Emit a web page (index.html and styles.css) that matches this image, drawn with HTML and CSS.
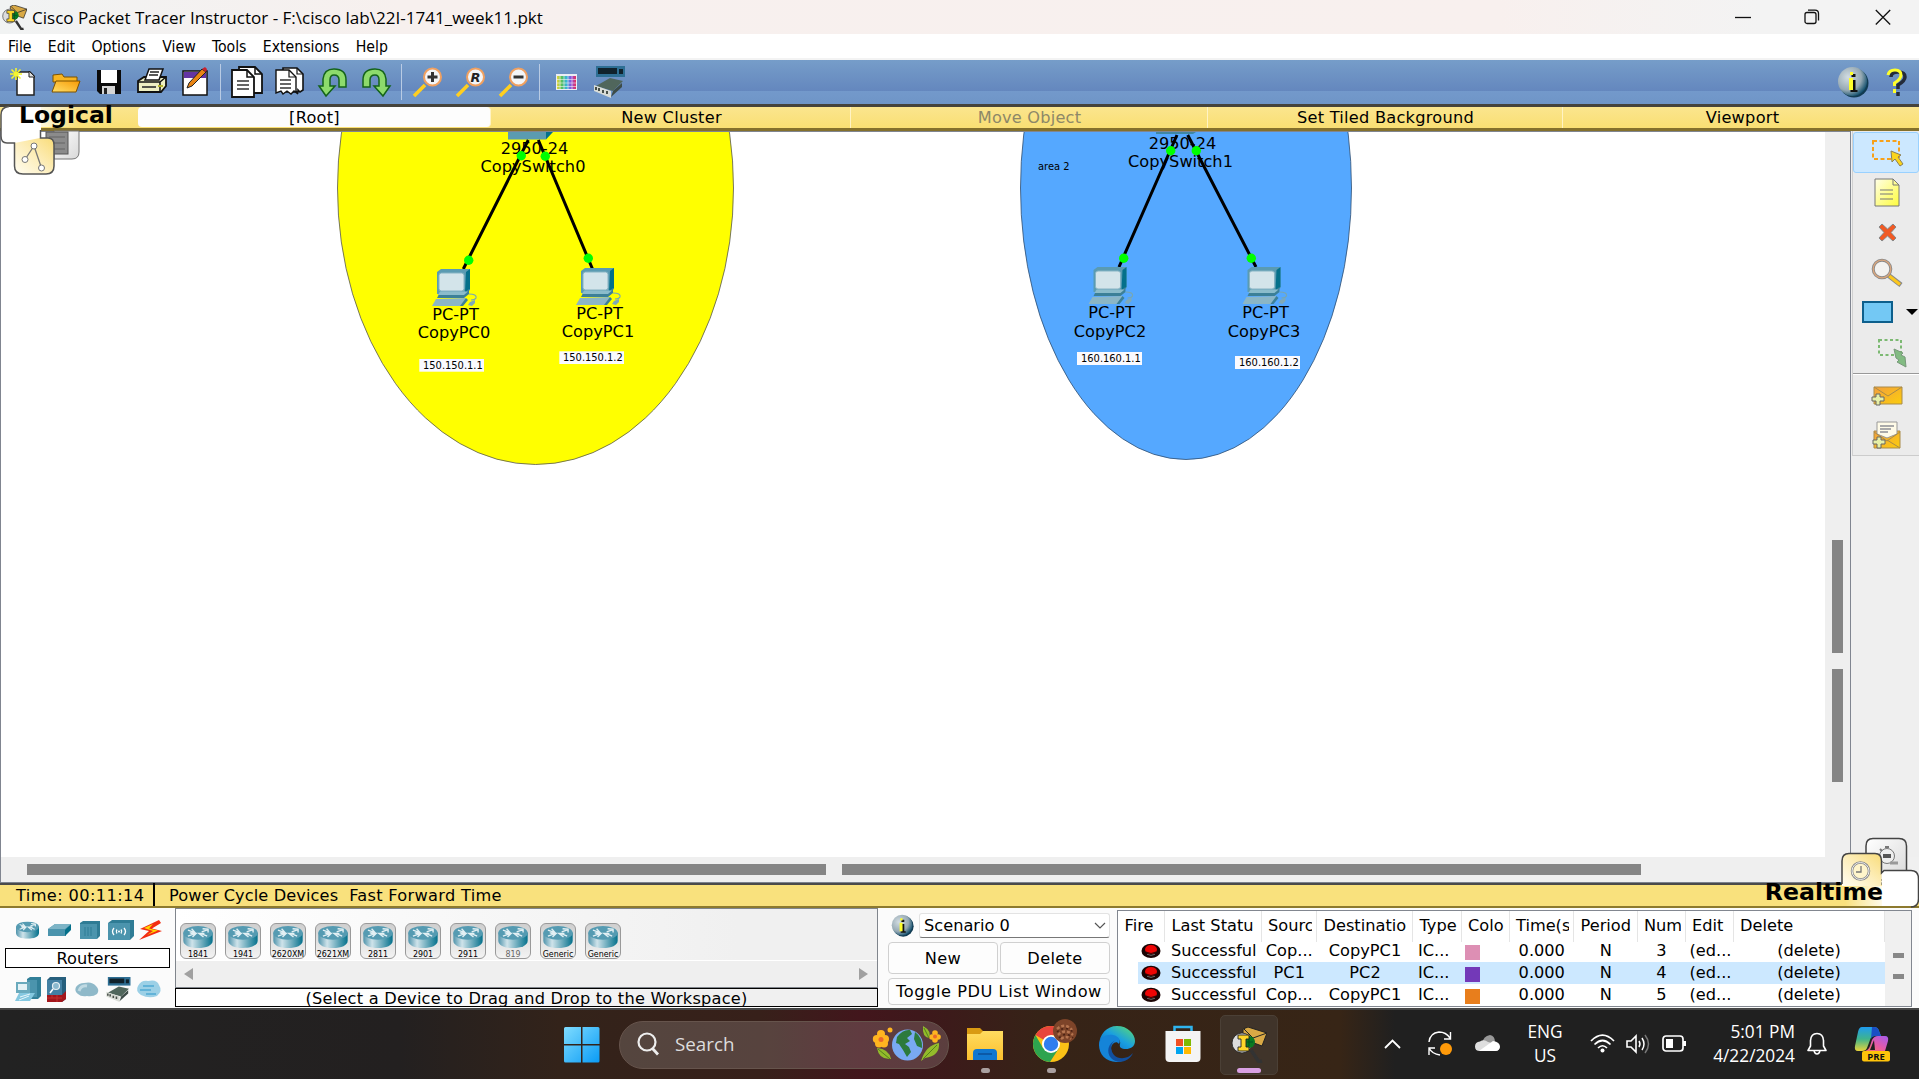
FILE: index.html
```
<!DOCTYPE html>
<html lang="en">
<head>
<meta charset="utf-8">
<title>Cisco Packet Tracer Instructor</title>
<link rel="stylesheet" href="styles.css">
</head>
<body>
<svg class="defs" width="0" height="0" aria-hidden="true">
  <defs>
    <linearGradient id="gTeal" x1="0" x2="1"><stop offset="0" stop-color="#4f93ab"/><stop offset=".3" stop-color="#cfe3ea"/><stop offset="1" stop-color="#04718c"/></linearGradient>
    <linearGradient id="gTab" x1="0" x2="1" y1="1" y2="0"><stop offset="0" stop-color="#fffdf2"/><stop offset=".5" stop-color="#fdeebb"/><stop offset="1" stop-color="#f9dc78"/></linearGradient>
    <linearGradient id="gWhiteTab" x1="0" x2="1"><stop offset=".35" stop-color="#fff"/><stop offset="1" stop-color="#fff" stop-opacity="0"/></linearGradient>
    <linearGradient id="gRealTab" x1="1" x2="0"><stop offset=".4" stop-color="#fff"/><stop offset="1" stop-color="#fff" stop-opacity="0"/></linearGradient>
    <linearGradient id="gGray" x1="0" x2="1" y1="0" y2="1"><stop offset="0" stop-color="#fff"/><stop offset="1" stop-color="#d8d8d8"/></linearGradient>
    <linearGradient id="gFolder" x1="0" x2="1" y1="1" y2="0"><stop offset="0" stop-color="#ffe06a"/><stop offset="1" stop-color="#f79a04"/></linearGradient>
    <linearGradient id="gNote" x1="0" x2="1" y1="0" y2="1"><stop offset="0" stop-color="#ffffe8"/><stop offset="1" stop-color="#fdfb3c"/></linearGradient>
    <linearGradient id="gMail" x1="0" x2="1" y1="0" y2="1"><stop offset="0" stop-color="#f4a03c"/><stop offset="1" stop-color="#fbcd0e"/></linearGradient>
    <radialGradient id="gBall" cx=".35" cy=".35" r=".7"><stop offset="0" stop-color="#d3dde2"/><stop offset=".65" stop-color="#96a9b3"/><stop offset="1" stop-color="#14506e"/></radialGradient>
    <linearGradient id="gWin" x1="0" x2="1" y1="0" y2="1"><stop offset="0" stop-color="#7fdcff"/><stop offset="1" stop-color="#0a9bf5"/></linearGradient>
    <linearGradient id="gExp" x1="0" x2="0" y1="0" y2="1"><stop offset="0" stop-color="#ffdc60"/><stop offset="1" stop-color="#fdbf2d"/></linearGradient>
    <linearGradient id="gEdge" x1="0" x2="1" y1="1" y2="0"><stop offset="0" stop-color="#0a63c0"/><stop offset=".5" stop-color="#1a9fe0"/><stop offset="1" stop-color="#5fe06a"/></linearGradient>
    <linearGradient id="gCop" x1="0" x2="0" y1="0" y2="1"><stop offset="0" stop-color="#1f9cf0"/><stop offset=".5" stop-color="#3fb48c"/><stop offset="1" stop-color="#e8d33a"/></linearGradient>
    <linearGradient id="gCop2" x1="1" x2="0" y1="0" y2="1"><stop offset="0" stop-color="#a35cf0"/><stop offset=".5" stop-color="#e45aa8"/><stop offset="1" stop-color="#ff7a5a"/></linearGradient>
    <linearGradient id="gHues" x1="0" x2="1"><stop offset="0" stop-color="#e8d63c"/><stop offset=".25" stop-color="#54c05a"/><stop offset=".5" stop-color="#35b6d8"/><stop offset=".75" stop-color="#8a4be0"/><stop offset="1" stop-color="#e8305a"/></linearGradient>

    <symbol id="pc" viewBox="0 0 46 38">
      <path d="M5 3L9 0H38V21L33 25H5Z" fill="#5a9bb2"/>
      <path d="M34 3L38 0V20L33 24Z" fill="#04708a"/>
      <rect x="7" y="4" width="25" height="18" rx="2.5" fill="#d3e4ea" stroke="#86b3c3"/>
      <path d="M8 23H33L37 20V25L32 29H5Z" fill="#3c8098"/>
      <path d="M8 22.500H36L32 26H6Z" fill="#8bbccb"/>
      <path d="M4 30L34 29L29 37H0Z" fill="#8bb6c6"/>
      <path d="M34 29L36 31L31 37H28Z" fill="#3c8098"/>
      <path d="M37 25Q45 25 44 29Q43 31 39 31" fill="none" stroke="#79a7b0" stroke-width="1.200"/>
      <path d="M38 33L43 31V34L40 37L36 36Z" fill="#7fa9b8"/>
    </symbol>
    <symbol id="router" viewBox="0 0 32 24">
      <path d="M0 7V16C0 21 7 24 16 24S32 21 32 16V7Z" fill="url(#gTeal)"/>
      <ellipse cx="16" cy="7.500" rx="16" ry="7.500" fill="#559bb2"/>
      <path d="M5 4.500L12 7M9 3L13 7.500L7 7.500M27 4L20 6.500M27 7V3.500L21 3M5 11L12 8.500M10 12L14 8L8 8M26 11L19 8M22 12L17 8L23 8" stroke="#e3f0f4" stroke-width="1.500" fill="none"/>
    </symbol>
    <symbol id="module" viewBox="0 0 32 32">
      <path d="M3 0H32V11H3Z" fill="#2e6f94"/><path d="M5 2H24V8H5Z" fill="#10222c"/><path d="M26 3H30V8H26Z" fill="#10222c"/>
      <path d="M3 20L17 12L30 15L20 25Z" fill="#50665c"/><path d="M1 19L18 25V32L1 25Z" fill="#d9dcd6"/><path d="M20 25L29 17V21L18 31Z" fill="#3d4c48"/>
      <path d="M3 21V24M6 22V25M10 24V27M14 25V28" stroke="#48504a" stroke-width="2"/>
    </symbol>
    <symbol id="info" viewBox="0 0 32 32">
      <circle cx="17" cy="17" r="14.500" fill="#123b52"/><circle cx="15.500" cy="15.500" r="14.500" fill="url(#gBall)"/>
      <path d="M13 7H17V10H13ZM12 13H17V23H19V25H12V23H14V15H12Z" fill="#111" transform="translate(1.500 1)"/><path d="M13 6H16V9H13ZM12 12H16V24H12Z" fill="#ffff2a"/>
    </symbol>
    <symbol id="lens" viewBox="0 0 32 32">
      <path d="M2 30L13 19" stroke="#ffcf20" stroke-width="3.500"/><circle cx="20.500" cy="11" r="8.500" fill="#f3f5f8" stroke="#f0a060" stroke-width="2"/>
    </symbol>
    <symbol id="appicon" viewBox="0 0 36 36">
      <path d="M12 2L17 0L36 6L31 19L12 12Z" fill="#d9a945" stroke="#222"/><path d="M13 2L22 11L36 6" fill="none" stroke="#222"/>
      <path d="M20 23L28 35L31 34" stroke="#333" stroke-width="3.500" fill="none"/>
      <circle cx="11" cy="16" r="10" fill="#dcdcdc" stroke="#222" stroke-width=".8"/><circle cx="18" cy="15" r="6" fill="#0a7a22"/><path d="M16 15h6M18 11v8" stroke="#052" stroke-width="1.200"/>
      <path d="M7 8H18V12H15V20H18V24H7V20H10V12H7Z" fill="#ffd629" stroke="#222" stroke-width=".9"/>
    </symbol>
    <symbol id="ball" viewBox="0 0 20 20" preserveAspectRatio="none"><circle cx="10" cy="10.500" r="9.500" fill="#1b0505" class="ballrim"/><circle cx="10" cy="8.500" r="6" class="ballface"/><path d="M5 12Q10 16 15 12" stroke="#1b0505" fill="none"/><path d="M6 15Q10 18 14 15" stroke="#777" fill="none"/></symbol>
  </defs>
</svg>

<header class="titlebar">
  <svg class="appicon" width="25" height="25"><use href="#appicon"/></svg>
  <h1>Cisco Packet Tracer Instructor - F:\cisco lab\22I-1741_week11.pkt</h1>
  <svg class="winbtn" viewBox="0 0 16 16"><path d="M0 8.500H16"/></svg>
  <svg class="winbtn" viewBox="0 0 16 16"><rect x="1" y="3.500" width="11" height="11" rx="2"/><path d="M4 1.200H11Q14.500 1.200 14.500 4.500V11.500"/></svg>
  <svg class="winbtn close" viewBox="0 0 16 16"><path d="M.8 1L15.200 15.500M15.200 1L.8 15.500"/></svg>
</header>

<nav class="menubar"><span>File</span><span>Edit</span><span>Options</span><span>View</span><span>Tools</span><span>Extensions</span><span>Help</span></nav>

<div class="toolbar">
  <svg viewBox="0 0 32 32"><path d="M10 6H23L27 10V29H10Z" fill="#fff" stroke="#222" stroke-width="1.500"/><path d="M22 5V11H28Z" fill="#ddd" stroke="#222"/><path d="M9 2V14M3 8H15M4.500 3.500L13.500 12.500M13.500 3.500L4.500 12.500" stroke="#f5f52d" stroke-width="1.600"/></svg>
  <svg viewBox="0 0 32 32"><path d="M3 9L12 8L14 11H27V16H3Z" fill="#f9b520" stroke="#7d5200"/><path d="M2 26L6 15H30L26 26Z" fill="url(#gFolder)" stroke="#7d5200"/></svg>
  <svg viewBox="0 0 32 32"><path d="M4 4H28V28H7L4 25Z" fill="#0b0b0b"/><rect x="8" y="4" width="16" height="13" fill="#fff"/><rect x="9" y="20" width="13" height="8" fill="#d5d5d5"/><rect x="11" y="22" width="3" height="6" fill="#222"/></svg>
  <svg viewBox="0 0 32 32"><path d="M2 15L8 11H30V20L25 26H2Z" fill="#eff0c2" stroke="#111" stroke-width="1.800"/><path d="M2 16H24V26M24 16L30 11" fill="none" stroke="#111" stroke-width="1.500"/><path d="M9 14L13 3H27L23 14Z" fill="#fff" stroke="#111" stroke-width="1.500"/><path d="M14 6H23M13 9H22M6 21H20" stroke="#222" stroke-width="1.500"/><path d="M22 20H27" stroke="#b7b72e" stroke-width="2"/></svg>
  <svg viewBox="0 0 32 32"><rect x="4" y="5" width="24" height="24" fill="#fff" stroke="#111" stroke-width="1.500"/><rect x="5" y="6" width="22" height="6" fill="#6435a3"/><path d="M8 22L10 17L23 3L27 6L13 20Z" fill="#e88414" stroke="#222"/><path d="M23 3L27 6L28 3L26 1Z" fill="#c9202c"/></svg>
  <i></i>
  <svg viewBox="0 0 32 32"><path d="M8 1H24L31 8V27H8Z" fill="#fff" stroke="#111" stroke-width="1.800"/><path d="M1 4H16L23 11V31H1Z" fill="#fff" stroke="#111" stroke-width="1.800"/><path d="M16 4V11H23M24 1V8H31" fill="none" stroke="#111" stroke-width="1.500"/><path d="M6 15H18M6 19H18M6 23H18" stroke="#333" stroke-width="1.300"/></svg>
  <svg viewBox="0 0 32 32"><path d="M9 2H23L29 8V24L26 26L24 24V26H9Z" fill="#fff" stroke="#111" stroke-width="1.600"/><path d="M2 4H15L22 11V25L24 28L20 25L17 28L13 25L9 28L7 25L2 27Z" fill="#fff" stroke="#111" stroke-width="1.400"/><path d="M15 4V11H22M23 2V8H29" fill="none" stroke="#111" stroke-width="1.200"/><path d="M6 14H17M6 18H17M6 22H17" stroke="#333" stroke-width="1.300"/></svg>
  <svg viewBox="0 0 32 32"><path d="M6 20V13Q7 3 17 3Q29 3 29 14V21H22V14Q22 9 17 9Q13 9 13 14V20H18L9 30L2 20Z" fill="#8ddb6c" stroke="#14631a" stroke-width="1.500"/></svg>
  <svg viewBox="0 0 32 32"><path d="M26 20V13Q25 3 15 3Q3 3 3 14V21H10V14Q10 9 15 9Q19 9 19 14V20H14L23 30L30 20Z" fill="#8ddb6c" stroke="#14631a" stroke-width="1.500"/></svg>
  <i></i>
  <svg viewBox="0 0 32 32"><use href="#lens"/><path d="M15.500 11H25.500M20.500 6V16" stroke="#333" stroke-width="3"/></svg>
  <svg viewBox="0 0 32 32"><use href="#lens"/><text x="15.500" y="16" class="lensr">R</text></svg>
  <svg viewBox="0 0 32 32"><use href="#lens"/><path d="M15.500 11H25.500" stroke="#333" stroke-width="3"/></svg>
  <i></i>
  <svg viewBox="0 0 32 32"><rect x="6" y="8" width="21" height="16" fill="#e9edf5"/><rect x="7" y="10" width="19" height="13" fill="url(#gHues)"/><path d="M6 13.500H27M6 17H27M6 20.500H27M10 8V24M14 8V24M18 8V24M22 8V24" stroke="#f3f3f3" stroke-width=".6"/></svg>
  <svg viewBox="0 0 32 32"><use href="#module"/></svg>
  <span class="spacer"></span>
  <svg class="infobtn" viewBox="0 0 32 32"><use href="#info"/></svg>
  <svg class="helpbtn" viewBox="0 0 22 28"><path d="M4 8Q4 3 11 3Q18 3 18 8Q18 12 11 16V20M11 23V27" fill="none" stroke="#242b3a" stroke-width="3.500" transform="translate(2 1)"/><path d="M3 7Q4 2 10 2Q16 2 16 7Q16 11 9.500 15V18M9.500 21V25" fill="none" stroke="#ffff2a" stroke-width="3"/></svg>
</div>

<div class="navbar">
  <svg class="logicaltab" width="90" height="72" viewBox="0 104 90 72">
    <path d="M54 131H79V152Q79 159 72 159H54Z" fill="url(#gGray)" stroke="#777"/><rect x="46" y="132" width="22" height="22" fill="#8b8b8b" stroke="#555"/><path d="M49 137H65M49 143H65M49 149H65" stroke="#777" stroke-width="2"/>
    <path d="M8 107H78V127H41V138H14V143H7Q1 143 1 136V113Q2 107 8 107Z" fill="url(#gWhiteTab)"/>
    <path d="M1 112V136Q1 143 7 143H14V138H41V107H8Z" fill="#fff"/>
    <path d="M41 138H48Q54 138 54 145V166Q54 174 46 174H23Q14.500 174 14.500 166V143L40 138Z" fill="url(#gTab)"/>
    <path d="M9 106.500Q1 107 1 115V136Q1 143 7 143H14.500V166Q14.500 174 23 174H46Q54 174 54 166V145Q54 138 48 138H40.500V130" fill="none" stroke="#555" stroke-width="1.500"/>
    <path d="M25 159.500L34 146L41.500 168" fill="none" stroke="#777" stroke-width="1.300"/><g fill="#fff" stroke="#777"><circle cx="25" cy="159.500" r="3"/><circle cx="34" cy="146" r="3"/><circle cx="41.500" cy="168" r="3"/></g>
  </svg>
  <strong>Logical</strong>
  <span class="root">[Root]</span><span>New Cluster</span><span class="off">Move Object</span><span>Set Tiled Background</span><span>Viewport</span>
</div>

<main class="work">
  <svg class="canvas" viewBox="1 132 1824 725">
    <ellipse cx="535.500" cy="188" rx="198" ry="276.500" fill="#ff0" stroke="#555" stroke-width=".8"/>
    <ellipse cx="1186" cy="188" rx="165.500" ry="271.500" fill="#55a8ff" stroke="#2d4d70" stroke-width=".8"/>
    <path d="M508 132H546V139.500H508Z" fill="#5b9bb0"/><path d="M546 132H553L546 139.500Z" fill="#04708a"/>
    <path d="M1156 132H1196L1193 134H1156Z" fill="#3f87a4"/>
    <g class="dev"><text x="534.500" y="153.700">2950-24</text><text x="533" y="171.700">CopySwitch0</text><text x="1182.500" y="149">2950-24</text><text x="1180.500" y="167.300">CopySwitch1</text></g>
    <path d="M528.300 140L463.300 269M538.300 140L592.300 268.500M1177 135L1119 267M1187.700 135L1256 267" stroke="#000" stroke-width="3"/>
    <g fill="#0f0"><circle cx="521.300" cy="155.700" r="4.700"/><circle cx="545.300" cy="156.300" r="4.700"/><circle cx="468.700" cy="260.300" r="4.700"/><circle cx="588.300" cy="258.300" r="4.700"/><circle cx="1170.700" cy="150.700" r="4.700"/><circle cx="1196.300" cy="150.700" r="4.700"/><circle cx="1123.700" cy="258.300" r="4.700"/><circle cx="1251.300" cy="258.300" r="4.700"/></g>
    <use href="#pc" x="432" y="269" width="46" height="38"/><use href="#pc" x="576" y="268" width="46" height="38"/><use href="#pc" x="1088.500" y="267" width="46" height="38"/><use href="#pc" x="1242.500" y="267" width="46" height="38"/>
    <g class="dev"><text x="455.500" y="319.500">PC-PT</text><text x="454" y="337.700">CopyPC0</text><text x="599.500" y="319">PC-PT</text><text x="598" y="337.300">CopyPC1</text><text x="1111.500" y="318">PC-PT</text><text x="1110" y="336.500">CopyPC2</text><text x="1265.500" y="318">PC-PT</text><text x="1264" y="336.500">CopyPC3</text></g>
    <g fill="#fafaff"><rect x="419.300" y="359" width="64.700" height="12.700"/><rect x="559.300" y="351.300" width="64.700" height="12.700"/><rect x="1077" y="352" width="65" height="13"/><rect x="1235" y="356" width="65" height="13"/></g>
    <g class="ip"><text x="423" y="369">150.150.1.1</text><text x="563" y="361.300">150.150.1.2</text><text x="1081" y="362.300">160.160.1.1</text><text x="1239" y="366.300">160.160.1.2</text><text x="1038" y="170">area 2</text></g>
  </svg>
  <div class="vscroll"><b></b><b></b></div>
  <aside class="tools">
    <div class="toolset">
      <div class="tool on"><svg width="32" height="28" viewBox="0 0 32 28"><rect x="2" y="2" width="26" height="18" fill="none" stroke="#f7a11a" stroke-width="2" stroke-dasharray="4 2.500"/><path d="M20 12L30 16L27 18L32 25L29 27L24 20L21 23Z" fill="#fbd51c" stroke="#8a7f5a"/></svg></div>
      <div class="tool"><svg width="26" height="29" viewBox="0 0 26 29"><path d="M1 1H19L25 7V28H1Z" fill="url(#gNote)" stroke="#777"/><path d="M19 1V7H25M6 12H19M6 16H19M6 21H19" fill="none" stroke="#777"/></svg></div>
      <div class="tool"><svg width="19" height="19" viewBox="0 0 19 19"><path d="M4 1L9.500 6L15 1L18 4L13 9.500L18 15L15 18L9.500 13L4 18L1 15L6 9.500L1 4Z" fill="#f15a24" stroke="#888"/></svg></div>
      <div class="tool"><svg width="32" height="30" viewBox="0 0 32 30"><path d="M17 17L30 27" stroke="#888" stroke-width="5"/><path d="M17 17L29 26.500" stroke="#fcc71c" stroke-width="3"/><circle cx="11" cy="11" r="8.800" fill="#f5f4f1" fill-opacity=".8" stroke="#888" stroke-width="3"/><circle cx="11" cy="11" r="8.800" fill="none" stroke="#dba67c" stroke-width="1.300"/></svg></div>
      <div class="tool shape"><svg width="31" height="22" viewBox="0 0 31 22"><rect x="1" y="1" width="29" height="20" fill="#73c8f4" stroke="#0d5f8c" stroke-width="2"/></svg><svg width="12" height="6" viewBox="0 0 12 6"><path d="M0 0H12L6 6Z"/></svg></div>
      <div class="tool resize"><svg width="30" height="29" viewBox="0 0 30 29"><rect x="2" y="2" width="22" height="15" fill="none" stroke="#7cb972" stroke-width="2" stroke-dasharray="3 2.500"/><path d="M17 11L26 15L24 17L28 19L29 29L20 24L22 22L19 20Z" fill="#82bb82" stroke="#78987a"/></svg></div>
      <hr>
      <div class="tool"><svg width="32" height="21" viewBox="0 0 32 21"><path d="M3 2H31V19H3Z" fill="url(#gMail)" stroke="#a98b4a"/><path d="M3 2L17 11L31 2" fill="none" stroke="#a98b4a"/><path d="M5 9H9V12H13V16H9V20H5V16H1V12H5Z" fill="#e6f0a8" stroke="#666"/></svg></div>
      <div class="tool"><svg width="30" height="28" viewBox="0 0 30 28"><path d="M2 10H28V27H2Z" fill="url(#gMail)" stroke="#a98b4a"/><path d="M5 1H25V13L15 17L5 13Z" fill="#fffbe8" stroke="#999"/><path d="M8 5H22M8 8H19M8 11H16" stroke="#aaa" stroke-width="2"/><path d="M2 11L15 20L28 11M15 19L28 27" fill="none" stroke="#a98b4a"/><path d="M5 16H9V19H13V23H9V27H5V23H1V19H5Z" fill="#e6f0a8" stroke="#666"/></svg></div>
    </div>
  </aside>
</main>
<div class="hscroll"><b></b><b></b></div>

<div class="timebar">
  <span class="time">Time: 00:11:14</span><span class="acts">Power Cycle Devices<em>Fast Forward Time</em></span>
  <svg class="realtab" width="84" height="74" viewBox="1835 835 84 74">
    <path d="M1866 880V846Q1866 838.500 1873 838.500H1899Q1906.500 838.500 1906.500 846V880Z" fill="url(#gGray)" stroke="#444" stroke-width="1.500"/>
    <circle cx="1887" cy="856" r="7.500" fill="#eee" stroke="#777"/><path d="M1883 854H1891V858H1883Z" fill="#555"/><path d="M1885 847H1889M1880 849L1882 851" stroke="#777" stroke-width="2"/><path d="M1890 863H1898" stroke="#999" stroke-width="3"/>
    <path d="M1845 886H1882V870.500H1911Q1918.500 870.500 1918.500 879V899Q1918.500 906 1911 906H1845Z" fill="url(#gRealTab)"/>
    <path d="M1882 870.500H1911Q1918.500 870.500 1918.500 879V899Q1918.500 906 1911 906H1882Z" fill="#fff"/>
    <path d="M1842 886V861Q1842 853.500 1849 853.500H1875Q1881.500 853.500 1881.500 861V886Z" fill="url(#gTab)"/>
    <path d="M1842 884V861Q1842 853.500 1849 853.500H1875Q1881.500 853.500 1881.500 861V873L1884 870.500H1911Q1918.500 870.500 1918.500 879V899Q1918.500 907 1911 907" fill="none" stroke="#444" stroke-width="1.500"/>
    <circle cx="1860.500" cy="871" r="8.500" fill="#fff5cb" stroke="#888" stroke-width="2.500"/><circle cx="1860.500" cy="871" r="8.500" fill="none" stroke="#eee"/><path d="M1861 866V872H1856" fill="none" stroke="#777" stroke-width="1.300"/>
  </svg>
  <strong>Realtime</strong>
</div>

<section class="bottom">
  <div class="kinds">
    <div class="kindrow">
      <svg width="23" height="18" viewBox="0 0 32 24"><use href="#router"/></svg>
      <svg width="24" height="16" viewBox="0 0 24 16"><path d="M1 7L8 2H24L19 8V14H1Z" fill="#4b94ad"/><path d="M18 8L24 2V8L18 14Z" fill="#04708a"/><path d="M1 7L8 2H24L18 7Z" fill="#7db4c6"/></svg>
      <svg width="20" height="18" viewBox="0 0 20 18"><path d="M0 2L3 0H20V15L17 18H0Z" fill="#2f7c95"/><path d="M0 3H17V18H0Z" fill="#4b94ad"/><path d="M5 6V15M8 6V15M11 6V15" stroke="#2f7c95"/></svg>
      <svg width="26" height="20" viewBox="0 0 26 20"><path d="M0 3L4 0H26V16L22 20H0Z" fill="#2f7c95"/><path d="M0 3H22V20H0Z" fill="#4b94ad"/><path d="M6 8Q3 11.500 6 15M9 9.500Q7.500 11.500 9 13.500M16 8Q19 11.500 16 15M13 9.500Q14.500 11.500 13 13.500" stroke="#fff" stroke-width="1.300" fill="none"/><circle cx="11" cy="11.500" r="1" fill="#fff"/></svg>
      <svg width="24" height="22" viewBox="0 0 24 22"><path d="M21 1L2 10L11 12L1 21L24 12L14 9.500L23 4Z" fill="#f22d12"/><path d="M15 5L6 9L15 12L9 16L20 11.500L11 9.500Z" fill="#ffd500"/></svg>
    </div>
    <div class="kindname">Routers</div>
    <div class="kindrow second">
      <svg width="26" height="24" viewBox="0 0 26 24"><path d="M12 2L15 0H26V19L23 22H12Z" fill="#317f98"/><path d="M12 3H22V20H12Z" fill="#4b94ad"/><path d="M1 5H15V16H1Z" fill="#6aaabd"/><path d="M3 7H12V13H3Z" fill="#e4f2f6"/><path d="M4 16H20L15 24H0Z" fill="#84c8e0"/><path d="M5 20L15 17M4 23L14 19" stroke="#e7f6fb"/></svg>
      <svg width="19" height="25" viewBox="0 0 19 25"><path d="M0 3L3 0H19V22L15 25H0Z" fill="#265f7d"/><path d="M0 3H15V18H0Z" fill="#4380a3"/><path d="M0 18H15L19 14V22L15 25H0Z" fill="#a3161c"/><path d="M0 21H15M5 18V21M10 18V25" stroke="#c2302e"/><circle cx="9" cy="9" r="3.500" fill="#8bb9cf" stroke="#e7f1f5" stroke-width="1.200"/><path d="M6 12L3 16" stroke="#fff" stroke-width="1.500"/></svg>
      <svg width="24" height="15" viewBox="0 0 24 15"><path d="M3 12Q-1 9 1 5Q4 1 9 1Q17-1 21 4Q25 8 22 12Q18 15 12 14Q6 15 3 12Z" fill="#8fb9c9"/><path d="M4 9Q6 3 12 4" fill="none" stroke="#c0dae3" stroke-width="3"/></svg>
      <svg width="26" height="25"><use href="#module"/></svg>
      <svg width="24" height="18" viewBox="0 0 24 18"><path d="M4 15Q-2 11 1 6Q4 0 11 1Q20-1 22 5Q26 11 20 16Q12 19 4 15Z" fill="#9cd0e6"/><path d="M6 6H17M3 10H14M9 14H19" stroke="#4fa9d4" stroke-width="1.600"/></svg>
    </div>
  </div>

  <div class="devices">
    <div class="shelf">
      <div class="items">
        <figure><svg><use href="#router"/></svg><figcaption>1841</figcaption></figure>
        <figure><svg><use href="#router"/></svg><figcaption>1941</figcaption></figure>
        <figure><svg><use href="#router"/></svg><figcaption>2620XM</figcaption></figure>
        <figure><svg><use href="#router"/></svg><figcaption>2621XM</figcaption></figure>
        <figure><svg><use href="#router"/></svg><figcaption>2811</figcaption></figure>
        <figure><svg><use href="#router"/></svg><figcaption>2901</figcaption></figure>
        <figure><svg><use href="#router"/></svg><figcaption>2911</figcaption></figure>
        <figure><svg><use href="#router"/></svg><figcaption class="dim">819</figcaption></figure>
        <figure><svg><use href="#router"/></svg><figcaption>Generic</figcaption></figure>
        <figure><svg><use href="#router"/></svg><figcaption>Generic</figcaption></figure>
      </div>
      <div class="shelfscroll"><svg width="9" height="12" viewBox="0 0 9 12"><path d="M9 0V12L0 6Z"/></svg><svg width="9" height="12" viewBox="0 0 9 12"><path d="M0 0V12L9 6Z"/></svg></div>
    </div>
    <div class="hint">(Select a Device to Drag and Drop to the Workspace)</div>
  </div>

  <div class="scenario">
    <div class="pick"><svg width="23" height="23"><use href="#info"/></svg><div class="select"><span>Scenario 0</span><svg width="12" height="7" viewBox="0 0 12 7"><path d="M1 1L6 6L11 1" fill="none" stroke="#555" stroke-width="1.200"/></svg></div></div>
    <div class="pair"><button class="new">New</button><button>Delete</button></div>
    <button class="toggle">Toggle PDU List Window</button>
  </div>

  <div class="pdu">
    <div class="grid">
      <div class="row head"><span>Fire</span><span>Last Statu</span><span>Sourc</span><span>Destinatio</span><span>Type</span><span>Colo</span><span>Time(s</span><span>Period</span><span>Num</span><span>Edit</span><span>Delete</span></div>
      <div class="row"><span class="fire"><svg width="20" height="15"><use href="#ball"/></svg></span><span class="l">Successful</span><span>Cop...</span><span>CopyPC1</span><span class="l">IC...</span><span class="l"><i class="sw pink"></i></span><span>0.000</span><span>N</span><span>3</span><span class="l">(ed...</span><span>(delete)</span></div>
      <div class="row sel"><span class="fire"><svg width="20" height="15"><use href="#ball"/></svg></span><span class="l">Successful</span><span>PC1</span><span>PC2</span><span class="l">IC...</span><span class="l"><i class="sw violet"></i></span><span>0.000</span><span>N</span><span>4</span><span class="l">(ed...</span><span>(delete)</span></div>
      <div class="row"><span class="fire"><svg width="20" height="15"><use href="#ball"/></svg></span><span class="l">Successful</span><span>Cop...</span><span>CopyPC1</span><span class="l">IC...</span><span class="l"><i class="sw orange"></i></span><span>0.000</span><span>N</span><span>5</span><span class="l">(ed...</span><span>(delete)</span></div>
    </div>
    <div class="gridscroll"><b></b><b></b></div>
  </div>
</section>

<footer class="taskbar">
  <svg class="start" width="36" height="36" viewBox="0 0 36 36"><path d="M0 1.500Q0 0 1.500 0H17V17H0ZM18.500 0H34Q35.500 0 35.500 1.500V17H18.500ZM0 18.500H17V35.500H1.500Q0 35.500 0 34ZM18.500 18.500H35.500V34Q35.500 35.500 34 35.500H18.500Z" fill="url(#gWin)"/></svg>
  <div class="search">
    <svg width="24" height="24" viewBox="0 0 24 24"><circle cx="10" cy="10" r="8.500" fill="none" stroke="#eee" stroke-width="2.200"/><path d="M15.500 16.500L21 22.500" stroke="#eee" stroke-width="2.800"/></svg>
    <span>Search</span>
    <svg class="globe" width="68" height="36" viewBox="0 0 68 36">
      <circle cx="34.500" cy="19" r="15.500" fill="#79a9f2"/><path d="M24 11Q30 3 37 4L39 8L34 12L37 15L32 18L36 21L38 26L34 31L30 24L26 18L23 17ZM42 6Q50 12 49 22L44 20L41 13Z" fill="#2c7a3c"/>
      <g fill="#ffb520"><circle cx="8" cy="8" r="4"/><circle cx="3.800" cy="13" r="4"/><circle cx="12" cy="13" r="4"/><circle cx="6" cy="17.500" r="4"/><circle cx="11" cy="17.500" r="4"/><circle cx="17" cy="4" r="2.500"/><circle cx="62" cy="7" r="2.800"/><circle cx="59" cy="11" r="2.800"/><circle cx="65" cy="11" r="2.800"/><circle cx="62" cy="14" r="2.800"/></g><circle cx="8" cy="13.500" r="2.500" fill="#e9682b"/><circle cx="62" cy="10.500" r="2" fill="#e9682b"/>
      <path d="M50 0Q59 5 56 12Q49 11 50 0ZM4 22Q16 23 18 33Q6 34 4 22ZM66 17Q67 30 52 32L48 35Q53 19 66 17Z" fill="#93bb2b"/><path d="M51 2L56 12M5 23L17 33M64 19L50 33" stroke="#55821a" fill="none"/>
    </svg>
  </div>
  <div class="apps">
    <div class="app run"><svg viewBox="0 0 36 36"><path d="M0 2H13L16 5H36V12H0Z" fill="#d99a12"/><path d="M0 8H13L16 5H36V34H0Z" fill="url(#gExp)"/><path d="M6 34V27Q6 23 10 23H26Q30 23 30 27V34Z" fill="#1177cf"/><path d="M11 28H25" stroke="#0b4f98" stroke-width="1.500"/></svg></div>
    <div class="app run"><svg viewBox="0 0 36 36"><circle cx="18" cy="18" r="18" fill="#fbc116"/><path d="M18 18L2.400 9A18 18 0 0 1 33.600 9L18 9Z" fill="#e8453c"/><path d="M2.400 9A18 18 0 0 0 17 36L26 22L18 18L10 22Z" fill="#2da44f"/><circle cx="18" cy="18" r="9" fill="#fff"/><circle cx="18" cy="18" r="7.200" fill="#2f7def"/><circle cx="32" cy="5" r="12" fill="#7d4429"/><path d="M24 3Q32 -4 39 4M25 9Q32 2 40 9M28 13Q33 9 38 13" stroke="#b5744f" stroke-width="2.500" fill="none" stroke-dasharray="3 2"/><path d="M24 6Q32 -1 40 6M26 12Q33 5 40 12" stroke="#4a2114" stroke-width="1.500" fill="none" stroke-dasharray="2 3"/></svg></div>
    <div class="app"><svg viewBox="0 0 36 36"><path d="M18 0C29 0 36 8 36 15C36 21 31 23 27 23C22 23 20 21 21 18C22 16 20 11 14 11C6 11 2 17 0 20C0 8 8 0 18 0Z" fill="url(#gEdge)"/><path d="M0 19C1 10 9 8 14 9C20 10 22 15 20 18C17 14 12 18 12 23C12 31 20 33 24 35C10 39 0 30 0 19Z" fill="#1584d8"/><path d="M17 14C11 17 11 24 15 29C20 34 29 33 34 27C30 37 17 38 12 32C7 26 9 17 17 14Z" fill="#124f9e"/></svg></div>
    <div class="app"><svg viewBox="0 0 36 36"><path d="M9.500 8V1H26.500V8" fill="none" stroke="#2fb4ee" stroke-width="2.500"/><path d="M.500 5H35.500V32Q35.500 36 31.500 36H4.500Q.500 36 .500 32Z" fill="#f4f4f4"/><path d="M11 13H18V20H11Z" fill="#f25022"/><path d="M19 13H26V20H19Z" fill="#7fba00"/><path d="M11 21H18V28H11Z" fill="#00a4ef"/><path d="M19 21H26V28H19Z" fill="#ffb900"/></svg></div>
    <div class="app active"><svg viewBox="0 0 36 36"><use href="#appicon"/></svg></div>
  </div>
  <div class="tray">
    <svg width="17" height="10" viewBox="0 0 17 10"><path d="M1 9L8.500 1.500L16 9" fill="none" stroke="#fff" stroke-width="1.800"/></svg>
    <svg width="25" height="25" viewBox="0 0 25 25"><path d="M1 11Q2 2 11 1Q18 1 22 7M22.500 1V8H16M7 17H1V24M1 17Q4 23 12 24" fill="none" stroke="#fff" stroke-width="1.400"/><circle cx="18" cy="18" r="6" fill="#ff9a0a"/></svg>
    <svg width="25" height="17" viewBox="0 0 25 17"><path d="M7 9Q8 1 15 0Q20 1 20 7L12 12Z" fill="#999"/><path d="M5 16Q0 16 0 11.500Q0 7 5 6.500Q9 4 13 7L24 10Q26 16 20 16Z" fill="#dedede"/><path d="M4 16L18 6Q25 7 25 12Q24 16 20 16Z" fill="#fff"/></svg>
    <div class="lang">ENG<br>US</div>
    <svg width="25" height="19" viewBox="0 0 25 19"><path d="M1 7Q12.500 -4.500 24 7M4.500 10.500Q12.500 2.500 20.500 10.500M8 14Q12.500 9.500 17 14" fill="none" stroke="#fff" stroke-width="1.700"/><circle cx="12.500" cy="16.500" r="2" fill="#fff"/></svg>
    <svg width="25" height="20" viewBox="0 0 25 20"><path d="M1 7H5L10 2V18L5 13H1Z" fill="none" stroke="#fff" stroke-width="1.600"/><path d="M13 7Q15 10 13 13M16 4Q20 10 16 16" fill="none" stroke="#fff" stroke-width="1.500"/><path d="M19 1Q26 10 19 19" fill="none" stroke="#777" stroke-width="1.500"/></svg>
    <svg width="25" height="17" viewBox="0 0 25 17"><rect x="1" y="1" width="20" height="15" rx="3" fill="none" stroke="#fff" stroke-width="1.700"/><rect x="4" y="4" width="7" height="9" fill="#fff"/><path d="M21 6H24V11H21Z" fill="#fff"/></svg>
    <div class="clock">5:01 PM<br>4/22/2024</div>
    <svg class="bell" width="20" height="23" viewBox="0 0 20 23"><path d="M1 18.500L3.500 14V8.500Q4 1.500 10 1.500T16.500 8.500V14L19 18.500Z" fill="none" stroke="#fff" stroke-width="1.600" stroke-linejoin="round"/><path d="M7 19Q8 22 10 22T13 19" fill="none" stroke="#fff" stroke-width="1.500"/></svg>
    <svg class="copilot" width="36" height="36" viewBox="0 0 36 36"><path d="M8 1H20Q24 1 25 5L27 10H21Q17 10 16 14L13 22Q12 25 8 25H4Q0 25 1 20L4 6Q5 1 8 1Z" fill="url(#gCop)"/><path d="M18 1H20Q24 1 25 5L27 10H21Q18 10 17 13Z" fill="#1b4fc4"/><path d="M24 10H31Q35 10 34 15L31 25H8Q14 26 16 20L18 14Q20 10 24 10Z" fill="url(#gCop2)"/><path d="M16 24L20 14L21 24Z" fill="#202020"/><rect x="8" y="25" width="28" height="10.500" rx="2" fill="#ffc40a"/><text x="22" y="33.500" class="pre">PRE</text></svg>
  </div>
</footer>
</body>
</html>
```
FILE: styles.css
```
* { box-sizing: border-box; }
body { margin: 0; width: 1919px; height: 1079px; overflow: hidden; display: flex; flex-direction: column; background: #f0f0f0; color: #000; font-family: "DejaVu Sans", Verdana, sans-serif; font-size: 16.200px; }
svg { display: block; flex: none; overflow: visible; }
.defs { position: absolute; }
h1, figure { margin: 0; font-weight: 400; }

.titlebar { height: 34px; flex: none; display: flex; align-items: center; padding: 0 28px 0 2px; background: linear-gradient(90deg, #f1f3f3 0, #f7f0ee 400px, #f8f0ee 1500px, #f3f3f3 1760px); }
.titlebar h1 { flex: 1; margin-left: 5px; font: 17.060px/35px "Open Sans", sans-serif; }
.winbtn { width: 16px; height: 16px; margin-left: 53px; fill: none; stroke: #111; stroke-width: 1.300; }
.winbtn.close { margin-left: 55px; }
.menubar { height: 26px; flex: none; display: flex; gap: 16.300px; padding: 0 8px; line-height: 25px; background: #fff; border-bottom: 2px solid #f3f3f3; font-family: "DejaVu Sans Condensed", Tahoma, sans-serif; font-size: 15.700px; }

.toolbar { height: 44px; flex: none; display: flex; align-items: center; padding-left: 1px; background: linear-gradient(#769dc9 0, #6487be 31px, #7399cb 31px, #6f95c7 44px); }
.toolbar svg { width: 32px; height: 32px; margin: 0 5.500px; }
.toolbar i { width: 1px; height: 36px; margin: 0 4px; background: #b9cbe4; }
.toolbar .spacer { flex: 1; }
.toolbar .infobtn { margin-right: 16px; }
.toolbar .helpbtn { width: 22px; height: 28px; margin: 0 12px 0 0; }
.lensr { font: italic bold 13px "DejaVu Sans", sans-serif; fill: #222; }

.navbar { position: relative; height: 27px; flex: none; display: grid; grid-template-columns: 137px 355px 359px 357px 355px 356px; border-top: 3px solid #45433c; border-bottom: 3px solid #84702c; background: linear-gradient(#fbe58e, #f9df73); text-align: center; line-height: 21px; }
.navbar span { border-right: 1px solid #fff3c4; padding-left: 1px; letter-spacing: .25px; }
.navbar .root { margin: 0 1px 0 1px; border-radius: 4px; background: #fdfdfd; height: 20px; }
.navbar .off { color: #8d8868; letter-spacing: .2px; }
.navbar span:last-child { border-right: 0; padding-left: 3px; }
.navbar strong { position: relative; z-index: 2; padding-left: 19px; text-align: left; font-size: 23.500px; line-height: 17px; }
.logicaltab { position: absolute; left: 0; top: -3px; z-index: 1; }

.work { height: 726px; flex: none; display: grid; grid-template-columns: 1824px 26px 68px; border-left: 1px solid #808590; background: #efefef; }
.canvas { width: 1824px; height: 725px; margin-top: 1px; background: #fff; overflow: hidden; outline: 1px solid #808590; clip-path: inset(-1px 0 0 0); }
.vscroll { height: 752px; border-top: 1px solid #808590; border-right: 1px solid #808590; background: #efefef; padding: 408px 7px 0; }
.vscroll b { display: block; width: 11px; height: 113px; margin-bottom: 16px; background: #858585; }
.tools { padding-left: 1px; }
.toolset { height: 325px; border-left: 1px solid #d0d0d0; border-bottom: 1px solid #ccc; background: #ebebeb; display: flex; flex-direction: column; padding-top: 1px; }
.tool { height: 40px; display: flex; align-items: center; justify-content: center; padding-left: 2px; }
.tool.on { height: 41px; border: 1px solid #99d1ff; background: #cce8ff; border-radius: 3px; padding-top: 1px; }
.tool.shape { justify-content: flex-start; padding-left: 9px; gap: 13px; }
.tool.resize { padding-left: 12px; }
.toolset hr { width: 100%; margin: 1px 0 0; border: 0; border-top: 1px solid #999; border-bottom: 1px solid #fff; }
.hscroll { height: 25px; flex: none; display: flex; gap: 16px; padding: 7px 0 0 26px; width: 1849px; border-left: 1px solid #808590; background: #efefef; }
.hscroll b { width: 799px; height: 11px; background: #858585; }

.timebar { position: relative; height: 26px; flex: none; display: flex; border-top: 1px solid #7c828d; border-bottom: 2px solid #8d7a2e; background: #f9e17d; box-shadow: inset 0 2px #4a4a4a; line-height: 25px; }
.timebar .time { width: 155px; padding-left: 16px; border-right: 2px solid #000; letter-spacing: .4px; }
.timebar .acts { padding-left: 14px; letter-spacing: .1px; }
.timebar em { margin-left: 11px; font-style: normal; letter-spacing: .3px; }
.timebar strong { position: absolute; right: 36px; top: -3px; font-size: 23.600px; }
.realtab { position: absolute; right: 0; top: -48px; }

.bottom { height: 100px; flex: none; display: grid; grid-template-columns: 175px 703px 239px 802px; background: #fbfbfb; }
.kinds { padding: 9px 5px 0; }
.kindrow { height: 25px; display: grid; grid-template-columns: 31px 33px 28px 30px 24px; align-items: center; padding-left: 11px; }
.kindrow.second { height: 30px; grid-template-columns: 32px 28px 30px 32px 26px; margin-top: 6px; padding-left: 10px; }
.kindname { height: 20px; margin-top: 6px; border: 1px solid #000; background: #fff; text-align: center; line-height: 19px; }
.devices { display: flex; flex-direction: column; }
.shelf { height: 80px; border: 1px solid #80858c; background: linear-gradient(90deg, #fff, #f0f0f0 80%); }
.items { height: 52px; display: flex; gap: 9px; padding: 14px 4px 0; border-bottom: 1px solid #fff; }
figure { width: 36px; height: 36px; padding-top: 2px; border: 1px solid #999; border-radius: 6px; background: linear-gradient(#cfcfcf, #f3f3f3); text-align: center; }
figure svg { width: 32px; height: 22px; margin: 0 1px; }
figcaption { margin: 1px -2px 0; font: 8.800px/10px "DejaVu Sans Condensed", sans-serif; }
.dim { color: #666; }
.shelfscroll { height: 26px; display: flex; justify-content: space-between; align-items: center; padding: 0 9px 0 8px; background: #efefef; fill: #a0a0a0; }
.hint { height: 19px; border: 1px solid #000; background: linear-gradient(90deg, #fff 20%, #f0f0f0 70%); text-align: center; line-height: 19px; letter-spacing: .23px; }
.scenario { padding: 5px 7px 0 10px; display: flex; flex-direction: column; gap: 4px; }
.pick { display: flex; gap: 5px; align-items: center; padding-left: 3px; height: 25px; }
.select { flex: 1; height: 25px; display: flex; align-items: center; justify-content: space-between; padding: 0 3px 0 4px; border: 1px solid #e3e3e3; border-bottom-color: #777; border-radius: 3px; background: #fff; }
.pair { display: flex; gap: 2px; }
button { padding: 0; font: inherit; letter-spacing: .35px; color: inherit; background: #fdfdfd; border: 1px solid #d0d0d0; border-radius: 4px; }
.pair button { flex: 1; height: 32px; }
.toggle { height: 27px; letter-spacing: .55px; }
.pdu { display: grid; grid-template-columns: 1fr 27px; margin: 2px 7px 1px 0; border: 1px solid #828790; background: #fff; overflow: hidden; }
.row { height: 22px; display: grid; grid-template-columns: 47px 96.500px 55.500px 96px 48.500px 48px 64.500px 63.500px 48px 48px 151px; align-items: center; padding-bottom: 1px; }
.row span { text-align: center; white-space: nowrap; overflow: hidden; line-height: 18px; }
.row.head { height: 29px; padding: 0; }
.row.head span { height: 31px; padding: 6px 0 0 6.500px; border-style: solid; border-width: 0 5px 0 0; border-image: linear-gradient(270deg, #e5e5e5 1px, #fff 1px) 0 5 0 0; text-align: left; }
.row span.l { text-align: left; padding-left: 5px; }
.row span.l:nth-child(2) { padding-left: 6px; }
.row span.l:nth-child(10) { padding-left: 4px; }
.row.sel { background: linear-gradient(90deg, transparent 20px, #cce8ff 20px); }
.row .fire { padding-left: 23px; }
.ballface { fill: #ee0505; }
.sel .ballface { fill: #a8334a; }
.sw { display: block; width: 15px; height: 15px; margin: 3px 0 0 -2px; }
.pink { background: #dd8fb4; }
.violet { background: #7339b8; }
.orange { background: #e87e1c; }
.gridscroll { padding: 42px 8px 0; background: #f0f0f0; }
.gridscroll b { display: block; width: 11px; height: 5px; margin-bottom: 16px; background: #888; }

.taskbar { height: 71px; flex: none; display: grid; grid-template-columns: 564px 55px 330px 342px 628px; align-items: center; border-top: 2px solid #454545; background: linear-gradient(90deg, #222 0, #232020 400px, #33231a 560px, #37201a 760px, #42161c 860px, #3e181b 920px, #362317 1040px, #372516 1340px, #202020 1395px); color: #fff; font-family: "Open Sans", sans-serif; }
.start { grid-column: 2; }
.search { height: 48px; display: flex; align-items: center; padding: 0 7px 2px 17px; border: 1px solid #66544c; border-radius: 24px; background: rgba(255, 255, 255, .16); }
.search span { flex: 1; margin-left: 14px; font-size: 18.800px; color: #ddd; }
.apps { display: flex; gap: 8px; padding-left: 7px; height: 60px; }
.app { position: relative; width: 58px; height: 60px; display: flex; justify-content: center; padding-top: 11px; border-radius: 5px; }
.app svg { width: 36px; height: 36px; }
.app.active { background: #40342a; border: 1px solid #4b4036; }
.app.run::after, .app.active::after { content: ""; position: absolute; bottom: 2px; width: 9px; height: 5px; border-radius: 3px; background: #aaa0a0; }
.app.active::after { width: 24px; background: #d9a0e3; bottom: 1px; }
.tray { display: grid; grid-template-columns: 44px 47px 45px 70px 36px 36px 36px 97px 59px 36px; align-items: center; padding: 0 0 2px 93px; font-size: 17.300px; line-height: 24px; }
.tray .lang { width: 50px; text-align: center; }
.tray .clock { text-align: right; }
.tray .bell { margin-left: 12px; }
.pre { font: bold 9.500px "Open Sans", sans-serif; fill: #111; text-anchor: middle; }
.dev { font-size: 16.200px; text-anchor: middle; }
.ip { font: 11px "DejaVu Sans Condensed", sans-serif; }
```
